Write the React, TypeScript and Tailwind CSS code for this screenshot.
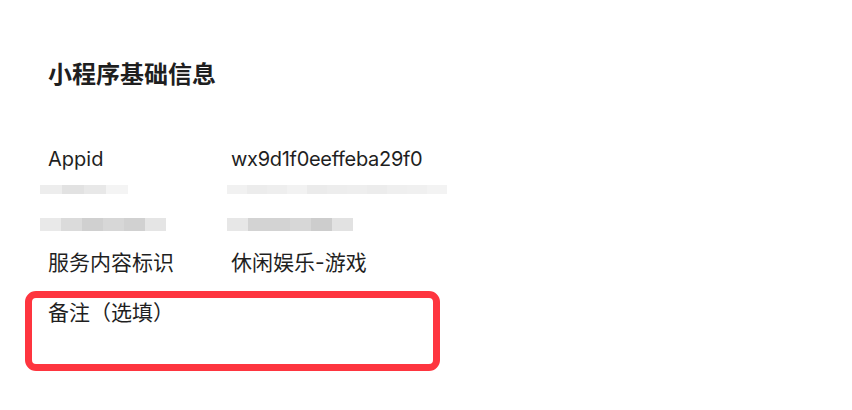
const font = { fontFamily: '"Inter", "Noto Sans CJK SC", sans-serif' }

const leftRow1 = ["#ededed", "#e2e2e2", "#e8e8e8", "#f4f4f4"]
const leftRow2 = ["#e9e9e9", "#dbdbdb", "#d0d0d0", "#d7d7d7", "#d1d1d1", "#e5e5e5"]
const rightRow1 = ["#f1f1f1", "#ececec", "#eeeeee", "#f2f2f2", "#ebebeb", "#ededed", "#eeeeee", "#ececec", "#efefef", "#f0f0f0", "#f3f3f3"]
const rightRow2 = ["#e7e7e7", "#d3d3d3", "#d3d3d3", "#d7d7d7", "#cdcdcd", "#e2e2e2"]

function Pixels({ colors, seg, h }: { colors: string[]; seg: number; h: number }) {
  return (
    <div className="flex blur-[0.6px]">
      {colors.map((c, i) => (
        <div key={i} style={{ background: c, width: seg, height: h }} />
      ))}
    </div>
  )
}

export default function App() {
  return (
    <div className="w-[852px] h-[410px] bg-white text-[#1f1f1f] pl-[48px] pt-[60px]" style={font}>
      <h1 className="text-[24px] font-bold leading-[30px]">小程序基础信息</h1>

      <div className="mt-[54px] flex items-center h-[30px] text-[20px]">
        <span className="w-[183px]">Appid</span>
        <span className="tracking-[-0.3px]">wx9d1f0eeffeba29f0</span>
      </div>

      <div className="mt-[0px] flex items-center h-[30px] ml-[-8px]">
        <div className="w-[187px]">
          <Pixels colors={leftRow1} seg={22} h={9} />
        </div>
        <Pixels colors={rightRow1} seg={20} h={9} />
      </div>

      <div className="mt-[5px] flex items-center h-[30px] ml-[-8px]">
        <div className="w-[187px]">
          <Pixels colors={leftRow2} seg={21} h={13} />
        </div>
        <Pixels colors={rightRow2} seg={21} h={13} />
      </div>

      <div className="mt-[9px] flex items-center h-[30px] text-[21px]">
        <span className="w-[183px]">服务内容标识</span>
        <span>休闲娱乐-游戏</span>
      </div>

      <div className="mt-[13px] ml-[-23px] w-[415px] h-[80px] border-[7px] border-[#fe353f] rounded-[11px] pl-[16px] pt-[1px]">
        <div className="text-[21px] leading-[28px]">备注（选填）</div>
      </div>
    </div>
  )
}
